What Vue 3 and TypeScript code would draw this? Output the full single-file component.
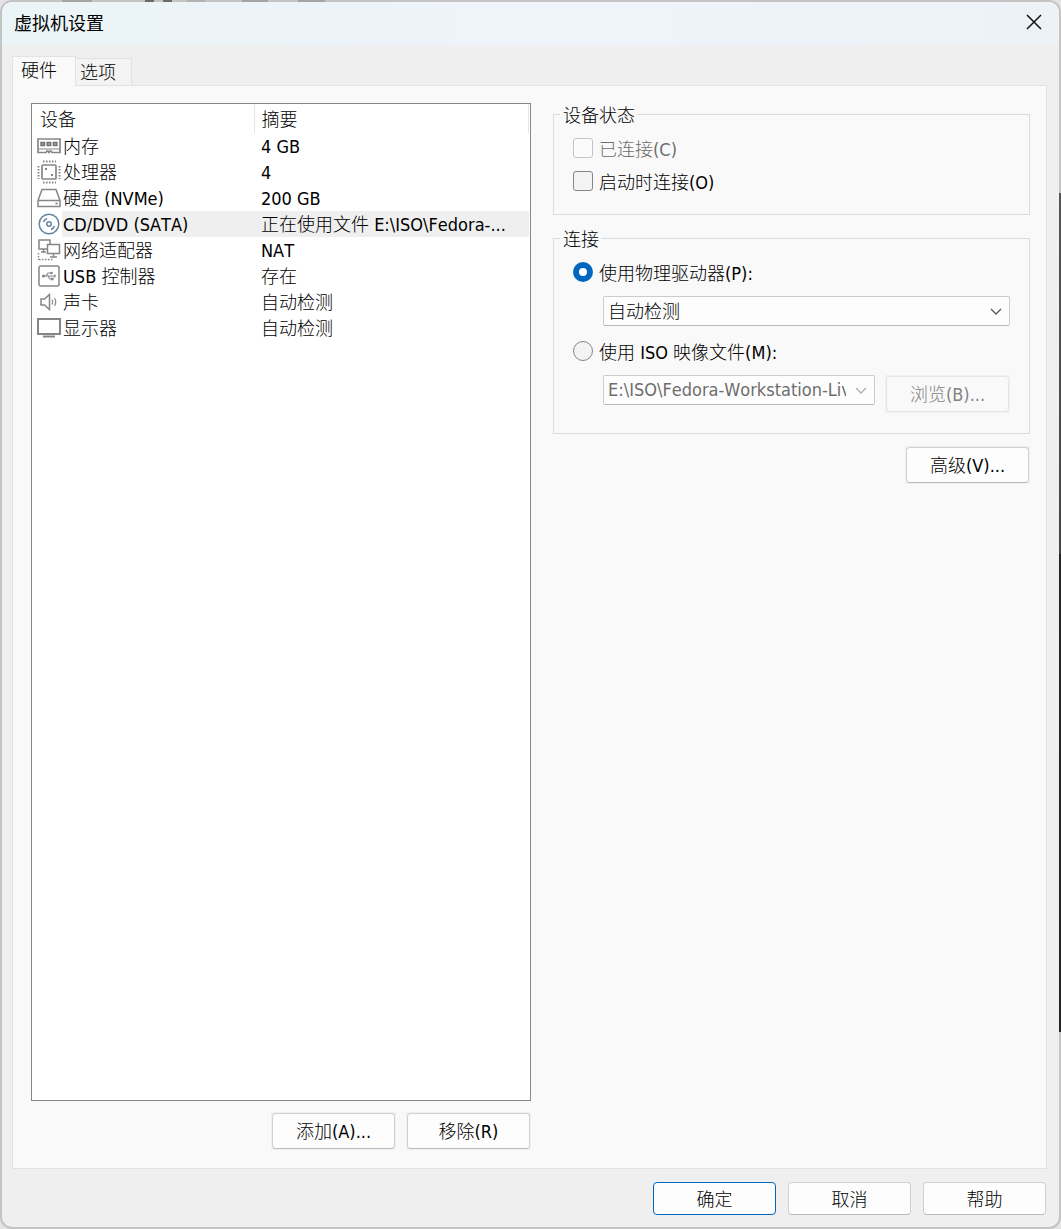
<script setup lang="ts">
import { ref } from 'vue'

interface Device {
  icon: string
  name: string
  summary: string
}

const devices: Device[] = [
  { icon: 'memory', name: '内存', summary: '4 GB' },
  { icon: 'cpu', name: '处理器', summary: '4' },
  { icon: 'disk', name: '硬盘 (NVMe)', summary: '200 GB' },
  { icon: 'cd', name: 'CD/DVD (SATA)', summary: '正在使用文件 E:\\ISO\\Fedora-...' },
  { icon: 'network', name: '网络适配器', summary: 'NAT' },
  { icon: 'usb', name: 'USB 控制器', summary: '存在' },
  { icon: 'sound', name: '声卡', summary: '自动检测' },
  { icon: 'display', name: '显示器', summary: '自动检测' },
]

const selected = ref(3)
const connectAtPowerOn = ref(false)
const source = ref<'physical' | 'iso'>('physical')
</script>

<template>
  <div class="desktop">
    <main class="dialog">
      <header class="titlebar">
        <h1>虚拟机设置</h1>
        <button class="close" type="button" aria-label="关闭">
          <svg width="16" height="16" viewBox="0 0 16 16"><path d="M1 1L15 15M15 1L1 15" stroke="#111" stroke-width="1.5" fill="none" /></svg>
        </button>
      </header>

      <div class="tabs" role="tablist">
        <button class="tab active" type="button" role="tab" aria-selected="true">硬件</button>
        <button class="tab" type="button" role="tab" aria-selected="false">选项</button>
      </div>

      <section class="page" role="tabpanel">
        <div class="left">
          <div class="list">
            <table>
              <thead>
                <tr>
                  <th class="col-device" scope="col">设备</th>
                  <th scope="col">摘要</th>
                </tr>
              </thead>
              <tbody>
                <tr v-for="(d, i) in devices" :key="d.icon" :class="{ selected: i === selected }" @click="selected = i">
                  <td class="device">
                    <div class="cell">
                      <svg class="icon" width="24" height="24" viewBox="0 0 24 24" fill="none" stroke="#868686" stroke-width="1.5" aria-hidden="true">
                        <template v-if="d.icon === 'memory'">
                          <path d="M1 5H23V18.500H15L14 17H13L12 18.500L11 17H10L9 18.500H1Z" stroke-width="1.700" />
                          <path d="M1 15H23" stroke-width="1.200" />
                          <g fill="#a8a8a8" stroke="#6e6e6e" stroke-width="1.400">
                            <rect x="4" y="8.500" width="3.500" height="3" />
                            <rect x="10.200" y="8.500" width="3.500" height="3" />
                            <rect x="16.400" y="8.500" width="3.500" height="3" />
                          </g>
                        </template>
                        <template v-else-if="d.icon === 'cpu'">
                          <rect x="5" y="5" width="14" height="14" rx="1" stroke-width="1.700" />
                          <path d="M6 1.500H19M6 22.500H19" stroke-dasharray="1.500 1.500" stroke-width="2" />
                          <path d="M1.500 6V19M22.500 6V19" stroke-dasharray="1.500 1.500" stroke-width="2" />
                          <path d="M8 9H10M14 15H16" stroke-width="2" />
                        </template>
                        <template v-else-if="d.icon === 'disk'">
                          <path d="M1 14.500L5 3.500H19L23 14.500V20.500H1ZM1 14.500H23" />
                          <path d="M18.500 17.500H20.500" stroke-width="2" />
                        </template>
                        <g v-else-if="d.icon === 'cd'" stroke="#6484a0">
                          <circle cx="12" cy="12" r="9.800" />
                          <circle cx="12" cy="12" r="2.200" />
                          <path d="M6.500 10Q7.500 7.500 10 6.500M17.500 14Q16.500 16.500 14 17.500" />
                        </g>
                        <template v-else-if="d.icon === 'network'">
                          <rect x="2" y="2" width="11" height="9" />
                          <path d="M6.500 11V14M4 14H9" />
                          <rect x="10.500" y="6.500" width="12" height="9" fill="#fff" />
                          <path d="M16.500 15.500V19M13 19H20" />
                          <path d="M1.500 15V22M2 21.500H16" stroke-dasharray="1.500 1.500" />
                        </template>
                        <template v-else-if="d.icon === 'usb'">
                          <rect x="2" y="2" width="20" height="20" rx="2" />
                          <path d="M7 12H18M9 12L11 9H14M11 12L13 15H15" stroke-width="1.200" />
                          <circle cx="6.500" cy="12" r="1.600" fill="#868686" stroke="none" />
                          <circle cx="14.500" cy="9" r="1.300" fill="#868686" stroke="none" />
                          <rect x="14" y="13.700" width="2.600" height="2.600" fill="#868686" stroke="none" />
                          <path d="M17 10.200L19.500 12L17 13.800Z" fill="#868686" stroke="none" />
                        </template>
                        <template v-else-if="d.icon === 'sound'">
                          <path d="M4 9H7.500L12.500 4.500V19.500L7.500 15H4Z" />
                          <path d="M15 9.500Q16.500 12 15 14.500M17.500 8Q20 12 17.500 16" stroke-width="1.200" />
                        </template>
                        <template v-else>
                          <rect x="1" y="3" width="22" height="15" stroke-width="2" />
                          <path d="M6 20.500H18" stroke-width="2" />
                        </template>
                      </svg>
                      <span class="name">{{ d.name }}</span>
                    </div>
                  </td>
                  <td class="summary">{{ d.summary }}</td>
                </tr>
              </tbody>
            </table>
          </div>
          <div class="actions">
            <span class="halo"><button class="btn" type="button">添加(A)...</button></span>
            <span class="halo"><button class="btn" type="button">移除(R)</button></span>
          </div>
        </div>

        <div class="right">
          <fieldset>
            <legend>设备状态</legend>
            <div class="checks">
              <label class="option disabled"><input type="checkbox" disabled /><span>已连接(C)</span></label>
              <label class="option"><input v-model="connectAtPowerOn" type="checkbox" /><span>启动时连接(O)</span></label>
            </div>
          </fieldset>

          <fieldset>
            <legend>连接</legend>
            <div class="sources">
              <label class="option"><input v-model="source" type="radio" name="source" value="physical" /><span>使用物理驱动器(P):</span></label>
              <div class="row">
                <div class="combo">
                  <select aria-label="物理驱动器">
                    <option>自动检测</option>
                  </select>
                  <svg width="12" height="8" viewBox="0 0 12 8"><path d="M1 1L6 6L11 1" fill="none" stroke="#555" stroke-width="1.300" /></svg>
                </div>
              </div>
              <label class="option"><input v-model="source" type="radio" name="source" value="iso" /><span>使用 ISO 映像文件(M):</span></label>
              <div class="row">
                <div class="combo">
                  <select aria-label="ISO 映像文件" disabled>
                    <option>E:\ISO\Fedora-Workstation-Live</option>
                  </select>
                  <svg width="12" height="8" viewBox="0 0 12 8"><path d="M1 1L6 6L11 1" fill="none" stroke="#b0b0b0" stroke-width="1.300" /></svg>
                </div>
                <span class="halo"><button class="btn" type="button" disabled>浏览(B)...</button></span>
              </div>
            </div>
          </fieldset>

          <span class="halo advanced"><button class="btn" type="button">高级(V)...</button></span>
        </div>
      </section>

      <footer>
        <button class="btn primary" type="button">确定</button>
        <button class="btn" type="button">取消</button>
        <button class="btn" type="button">帮助</button>
      </footer>
    </main>
  </div>
</template>

<style>
body {
  margin: 0;
}
</style>

<style scoped>
.desktop {
  position: relative;
  display: flex;
  min-height: 100vh;
  background: #e4e4e4;
  font: 300 18px/24px "DejaVu Sans Condensed", "Noto Sans CJK SC Light", "Noto Sans CJK SC", sans-serif;
  font-kerning: none;
  color: #000;
}
.desktop *,
.desktop {
  box-sizing: border-box;
}
/* parts of the windows behind the dialog that show past its edges */
.desktop::before,
.desktop::after {
  content: "";
  position: absolute;
  pointer-events: none;
}
.desktop::before {
  top: 0;
  left: 62px;
  width: 263px;
  height: 2px;
  background: linear-gradient(
    90deg,
    #a5a5a5 30px, transparent 30px 83px,
    #6a6a6a 83px 92px, transparent 92px 101px,
    #6a6a6a 101px 110px, transparent 110px 125px,
    #b2b2b2 125px 143px, transparent 143px 180px,
    #a5a5a5 180px 206px, transparent 206px 236px,
    #a5a5a5 236px
  );
}
.desktop::after {
  top: 193px;
  right: 0;
  bottom: 197px;
  width: 2px;
  background: linear-gradient(#555, #444 43%, #262626 43%, #222);
}
.dialog {
  flex: 1;
  display: flex;
  flex-direction: column;
  min-width: 0;
  border: 2px solid #c4c4c4;
  border-radius: 12px;
  background: #efefef;
  overflow: hidden;
}
button,
select {
  font: inherit;
  font-kerning: none;
  color: inherit;
}
.titlebar {
  display: flex;
  align-items: center;
  justify-content: space-between;
  height: 43px;
  padding: 0 17px 4px 12px;
  background: linear-gradient(90deg, #ebf4f7, #eff4fb 60%, #edf2f7);
}
h1 {
  margin: 0;
  font: 400 18px/24px "Noto Sans CJK SC", sans-serif;
}
.close {
  display: flex;
  padding: 0;
  border: 0;
  background: none;
}
.tabs {
  display: flex;
  align-items: flex-end;
  margin: 11px 12px -1px 10px;
}
.tab {
  height: 28px;
  padding: 2px 15px 0 4px;
  border: 1px solid #e2e2e2;
  border-left: 0;
  background: #f3f3f3;
}
.tab.active {
  position: relative;
  height: 30px;
  padding: 0 18px 2px 8px;
  border-left: 1px solid #e2e2e2;
  border-bottom: 0;
  background: #f9f9f9;
}
.page {
  flex: 1;
  display: flex;
  gap: 22px;
  margin: 0 12px 0 10px;
  padding: 17px 16px 18px 18px;
  border: 1px solid #e2e2e2;
  background: #f9f9f9;
}
.left {
  flex: 0 0 500px;
  display: flex;
  flex-direction: column;
  gap: 11px;
}
.list {
  flex: 1;
  padding-right: 1px;
  border: 1px solid #828790;
  background: #fff;
}
table {
  width: 100%;
  border-collapse: collapse;
  table-layout: fixed;
}
th {
  height: 29px;
  padding: 2px 6px 0 8px;
  text-align: left;
  font-weight: 300;
  border-right: 1px solid #e5e5e5;
}
th + th {
  padding-left: 7px;
}
.col-device {
  width: 222px;
}
td {
  height: 26px;
  padding: 0;
  line-height: 24px;
  white-space: nowrap;
}
.cell {
  display: flex;
  height: 26px;
}
.icon {
  flex: none;
  margin: 1px 1px 0 5px;
}
.name {
  flex: 1;
  padding: 2px 0 0 1px;
}
.summary {
  padding: 2px 0 0 7px;
}
.selected .name,
.selected .summary {
  background: #efefef;
}
.actions {
  display: flex;
  justify-content: flex-end;
  gap: 10px;
}
.halo {
  display: flex;
  padding: 1px;
  background: #f0f0f0;
}
.btn {
  width: 123px;
  height: 36px;
  padding: 2px 0 0;
  border: 1px solid #d0d0d0;
  border-bottom-color: #bababa;
  border-radius: 4px;
  background: #fdfdfd;
  white-space: nowrap;
}
.btn:disabled {
  border-color: #e6e6e6;
  background: #f9f9f9;
  color: #838383;
}
.right {
  flex: 1;
  display: flex;
  flex-direction: column;
  gap: 11px;
  min-width: 0;
  margin-top: -1px;
}
fieldset {
  min-width: 0;
  margin: 0;
  padding: 0;
  border: 1px solid #dcdcdc;
}
legend {
  margin-left: 6px;
  padding: 4px 2px 0 3px;
  line-height: 20px;
}
.checks {
  display: flex;
  flex-direction: column;
  gap: 9px;
  padding: 10px 19px 21px;
}
.option {
  display: flex;
  align-items: center;
  gap: 6px;
}
.option span {
  padding-top: 4px;
  line-height: 20px;
}
.option.disabled {
  color: #6d6d6d;
}
input {
  appearance: none;
  flex: none;
  width: 20px;
  height: 20px;
  margin: 0;
  border: 1px solid #868686;
  border-radius: 3px;
  background: #f3f3f3;
}
input:disabled {
  border-color: #c5c5c5;
  background: #fbfbfb;
}
input[type="radio"] {
  border-radius: 50%;
}
input[type="radio"]:checked {
  border: 6px solid #0067c0;
  background: #fff;
}
.sources {
  display: flex;
  flex-direction: column;
  padding: 10px 19px 20px;
}
.row {
  display: flex;
  align-items: flex-start;
  gap: 10px;
  margin: 12px 0 0 30px;
}
.row + .option {
  margin-top: 13px;
}
.combo {
  position: relative;
  flex: 1;
  min-width: 0;
}
.combo svg {
  position: absolute;
  right: 8px;
  top: 12px;
  pointer-events: none;
}
select {
  display: block;
  appearance: none;
  width: 100%;
  height: 30px;
  padding: 2px 28px 0 4px;
  border: 1px solid #cccccc;
  border-bottom-color: #b8b8b8;
  border-radius: 2px;
  background: #fdfdfd;
}
select:disabled {
  padding-top: 0;
  color: #6d6d6d;
  opacity: 1;
}
.advanced {
  align-self: flex-end;
  margin-top: 1px;
}
footer {
  display: flex;
  justify-content: flex-end;
  gap: 12px;
  padding: 13px 13px 12px;
}
footer .btn {
  height: 33px;
}
.primary {
  border-color: #0067c0;
}
</style>
